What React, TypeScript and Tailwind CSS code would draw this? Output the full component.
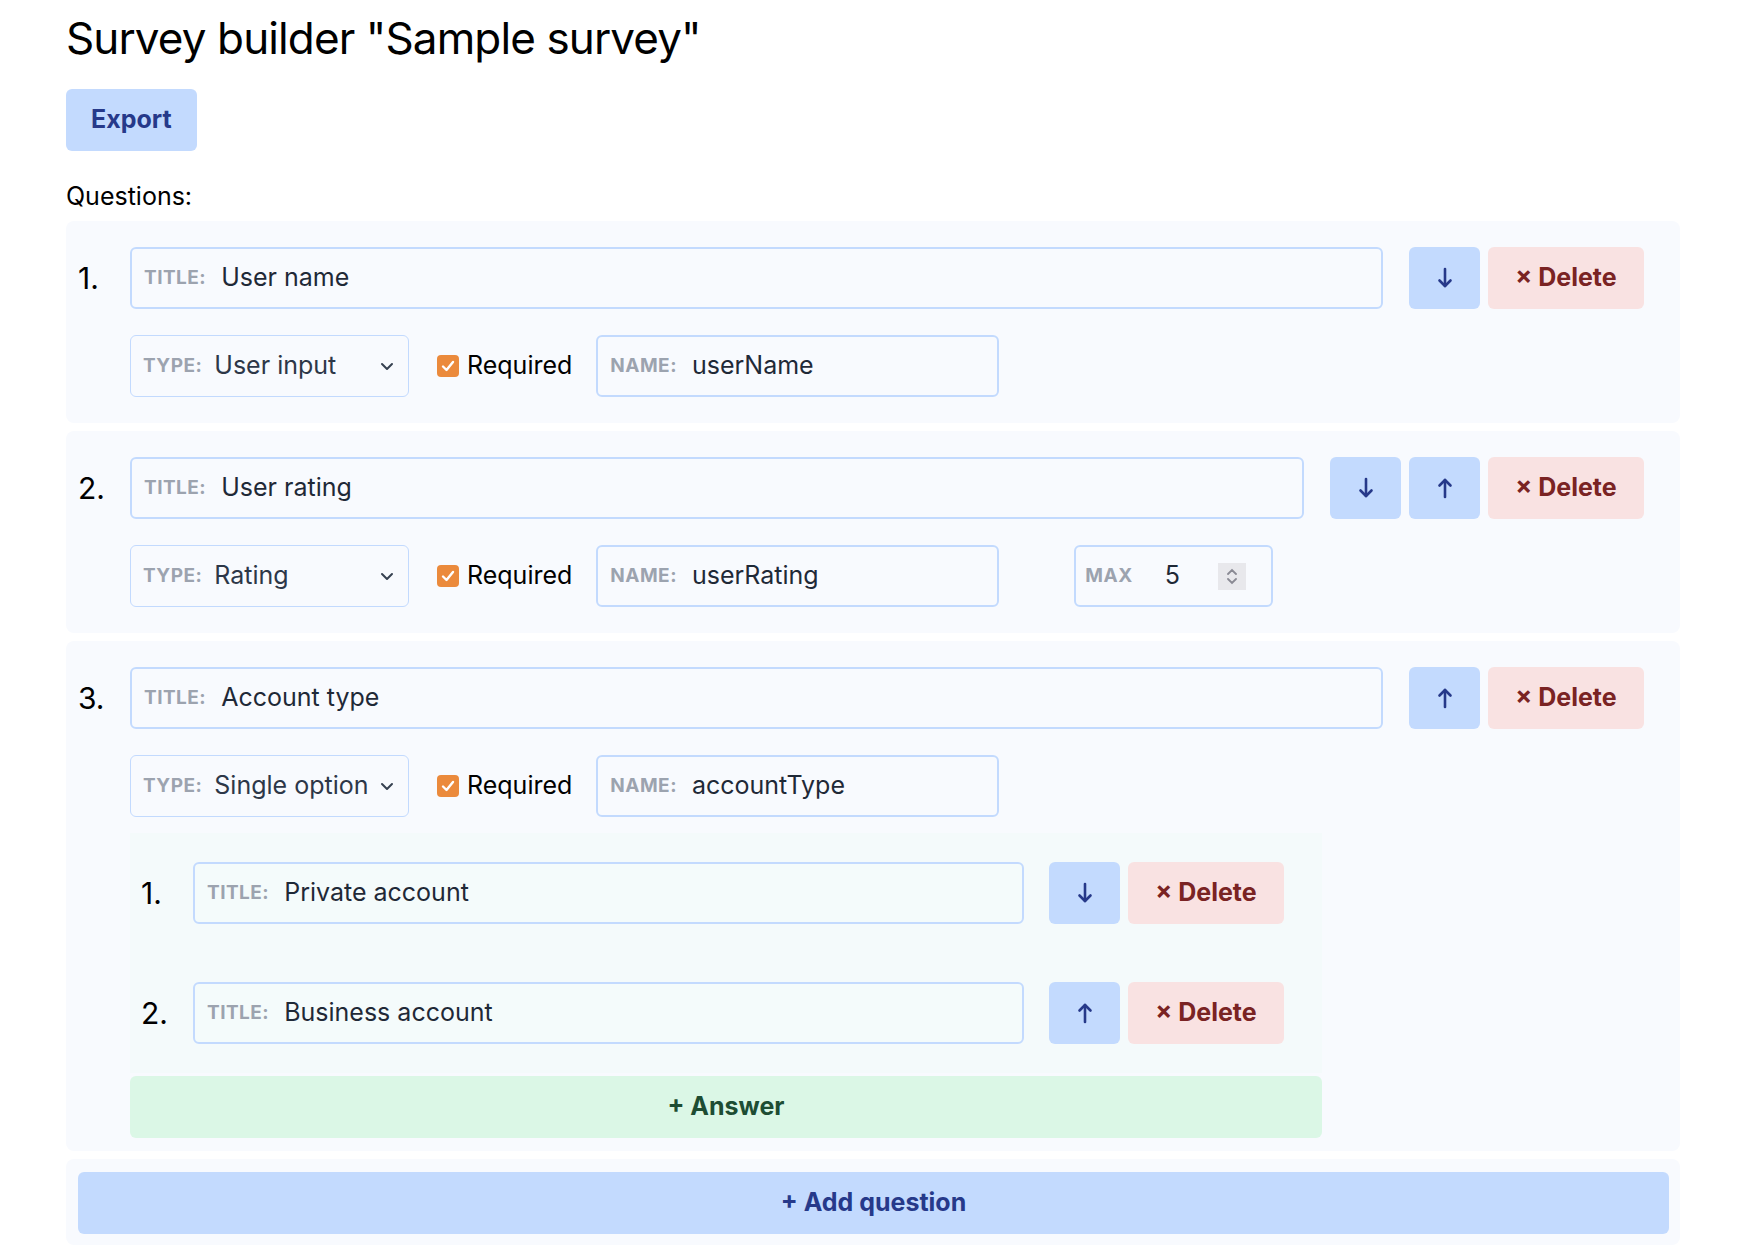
import { useState } from 'react'

type Answer = { title: string }
type Question = {
  title: string
  type: string
  required: boolean
  name: string
  max?: number
  answers?: Answer[]
}

const questions: Question[] = [
  { title: 'User name', type: 'User input', required: true, name: 'userName' },
  { title: 'User rating', type: 'Rating', required: true, name: 'userRating', max: 5 },
  {
    title: 'Account type',
    type: 'Single option',
    required: true,
    name: 'accountType',
    answers: [{ title: 'Private account' }, { title: 'Business account' }],
  },
]

function Arrow({ dir }: { dir: 'up' | 'down' }) {
  return (
    <svg width="16" height="24" viewBox="0 0 16 24" fill="none" stroke="currentColor" strokeWidth="2.6" strokeLinecap="round" strokeLinejoin="round">
      {dir === 'down' ? (
        <>
          <path d="M8 3v17" />
          <path d="M2.5 14.5 8 20l5.5-5.5" />
        </>
      ) : (
        <>
          <path d="M8 21V4" />
          <path d="M2.5 9.5 8 4l5.5 5.5" />
        </>
      )}
    </svg>
  )
}

function MoveButton({ dir }: { dir: 'up' | 'down' }) {
  return (
    <button className="flex h-[62px] w-[71px] items-center justify-center rounded-[6px] bg-[#c3dafe] text-[#26398a]">
      <Arrow dir={dir} />
    </button>
  )
}

function DeleteButton() {
  return (
    <button className="h-[62px] w-[156px] rounded-[6px] bg-[#f9e2e2] text-[25px] font-bold text-[#7a2323]">
      × Delete
    </button>
  )
}

function Label({ children, className = 'mr-[15px]' }: { children: React.ReactNode; className?: string }) {
  return (
    <span className={`shrink-0 text-[19px] font-bold uppercase tracking-wide text-[#9ca3af] ${className}`}>{children}</span>
  )
}

function TitleInput({ value, className = '' }: { value: string; className?: string }) {
  const [v, setV] = useState(value)
  return (
    <label className={`flex h-[62px] items-center rounded-[6px] border-2 border-[#c3dafe] px-3 ${className}`}>
      <Label>Title:</Label>
      <input
        value={v}
        onChange={(e) => setV(e.target.value)}
        className="min-w-0 flex-1 bg-transparent text-[25px] text-[#1f2937] outline-none"
      />
    </label>
  )
}

function Checkbox() {
  return (
    <span className="flex h-[22px] w-[22px] items-center justify-center rounded-[4px] bg-[#eb8a3c]">
      <svg width="14" height="12" viewBox="0 0 14 12" fill="none" stroke="white" strokeWidth="2.4" strokeLinecap="round" strokeLinejoin="round">
        <path d="M2 6.5 5.5 10 12 2" />
      </svg>
    </span>
  )
}

function QuestionCard({ q, index, total }: { q: Question; index: number; total: number }) {
  return (
    <section className="rounded-[8px] bg-[#f8fafe] py-[26px] pl-3 pr-9">
      <div className="flex items-center">
        <span className="w-[52px] shrink-0 text-[30px] text-black">{index + 1}.</span>
        <TitleInput value={q.title} className="flex-1" />
        <div className="ml-[26px] flex gap-2">
          {index < total - 1 && <MoveButton dir="down" />}
          {index > 0 && <MoveButton dir="up" />}
          <DeleteButton />
        </div>
      </div>

      <div className="ml-[52px] mt-[26px] flex items-center">
        <label className="flex h-[62px] w-[279px] items-center rounded-[6px] border border-[#c3dafe] pl-3 pr-[14px]">
          <Label className="mr-3">Type:</Label>
          <span className="flex-1 whitespace-nowrap text-[25px] text-[#2d3748]">{q.type}</span>
          <svg width="14" height="9" viewBox="0 0 14 9" fill="none" stroke="#374151" strokeWidth="2" strokeLinecap="round" strokeLinejoin="round">
            <path d="M2 2l5 5 5-5" />
          </svg>
        </label>

        <label className="ml-[28px] flex items-center gap-2 text-[25px] text-black">
          <Checkbox />
          Required
        </label>

        <label className="ml-[24px] flex h-[62px] w-[403px] items-center rounded-[6px] border-2 border-[#c3dafe] px-3">
          <Label>Name:</Label>
          <span className="text-[25px] text-[#1f2937]">{q.name}</span>
        </label>

        {q.max !== undefined && (
          <label className="ml-[75px] flex h-[62px] w-[199px] items-center rounded-[6px] border-2 border-[#c3dafe] pl-[9px] pr-[25px]">
            <Label className="">Max</Label>
            <span className="ml-[32px] text-[25px] text-[#1f2937]">{q.max}</span>
            <span className="ml-auto flex h-[27px] w-[28px] flex-col items-center justify-center gap-[3px] bg-[#e8e8ec]">
              <svg width="12" height="7" viewBox="0 0 12 7" fill="none" stroke="#8a8a94" strokeWidth="1.8" strokeLinecap="round">
                <path d="M2 6l4-4 4 4" />
              </svg>
              <svg width="12" height="7" viewBox="0 0 12 7" fill="none" stroke="#8a8a94" strokeWidth="1.8" strokeLinecap="round">
                <path d="M2 1l4 4 4-4" />
              </svg>
            </span>
          </label>
        )}
      </div>

      {q.answers && (
        <div className="-mb-[13px] ml-[52px] mt-[16px] w-[1192px]">
          {q.answers.map((a, i) => (
            <div key={i} className="flex items-center bg-[#f4fafb] py-[29px] pl-[11px] pr-[38px]">
              <span className="w-[52px] shrink-0 text-[30px] text-black">{i + 1}.</span>
              <TitleInput value={a.title} className="flex-1 bg-[#f4fbfb]" />
              <div className="ml-[25px] flex gap-2">
                {i < q.answers!.length - 1 && <MoveButton dir="down" />}
                {i > 0 && <MoveButton dir="up" />}
                <DeleteButton />
              </div>
            </div>
          ))}
          <button className="mt-[3px] h-[62px] w-full rounded-[6px] bg-[#dbf7e6] text-[25px] font-bold text-[#1d4d33]">
            + Answer
          </button>
        </div>
      )}
    </section>
  )
}

export default function App() {
  return (
    <div className="min-h-screen bg-white pb-[13px] pl-[66px] pr-[76px] pt-[12px] font-['Inter','Noto_Sans',sans-serif] text-black">
      <h1 className="text-[44px] font-normal leading-[53px] tracking-[-0.02em]">Survey builder "Sample survey"</h1>

      <button className="mt-[24px] h-[62px] rounded-[6px] bg-[#c3dafe] px-[25px] text-[25px] font-bold text-[#26398a]">
        Export
      </button>

      <p className="mb-[10px] mt-[30px] text-[25px] leading-[30px]">Questions:</p>

      <div className="flex flex-col gap-2">
        {questions.map((q, i) => (
          <QuestionCard key={i} q={q} index={i} total={questions.length} />
        ))}
        <div className="rounded-[8px] bg-[#f8fafe] pb-[11px] pl-3 pr-[11px] pt-[13px]">
          <button className="h-[62px] w-full rounded-[6px] bg-[#c3dafe] text-[25px] font-bold text-[#26398a]">
            + Add question
          </button>
        </div>
      </div>
    </div>
  )
}
